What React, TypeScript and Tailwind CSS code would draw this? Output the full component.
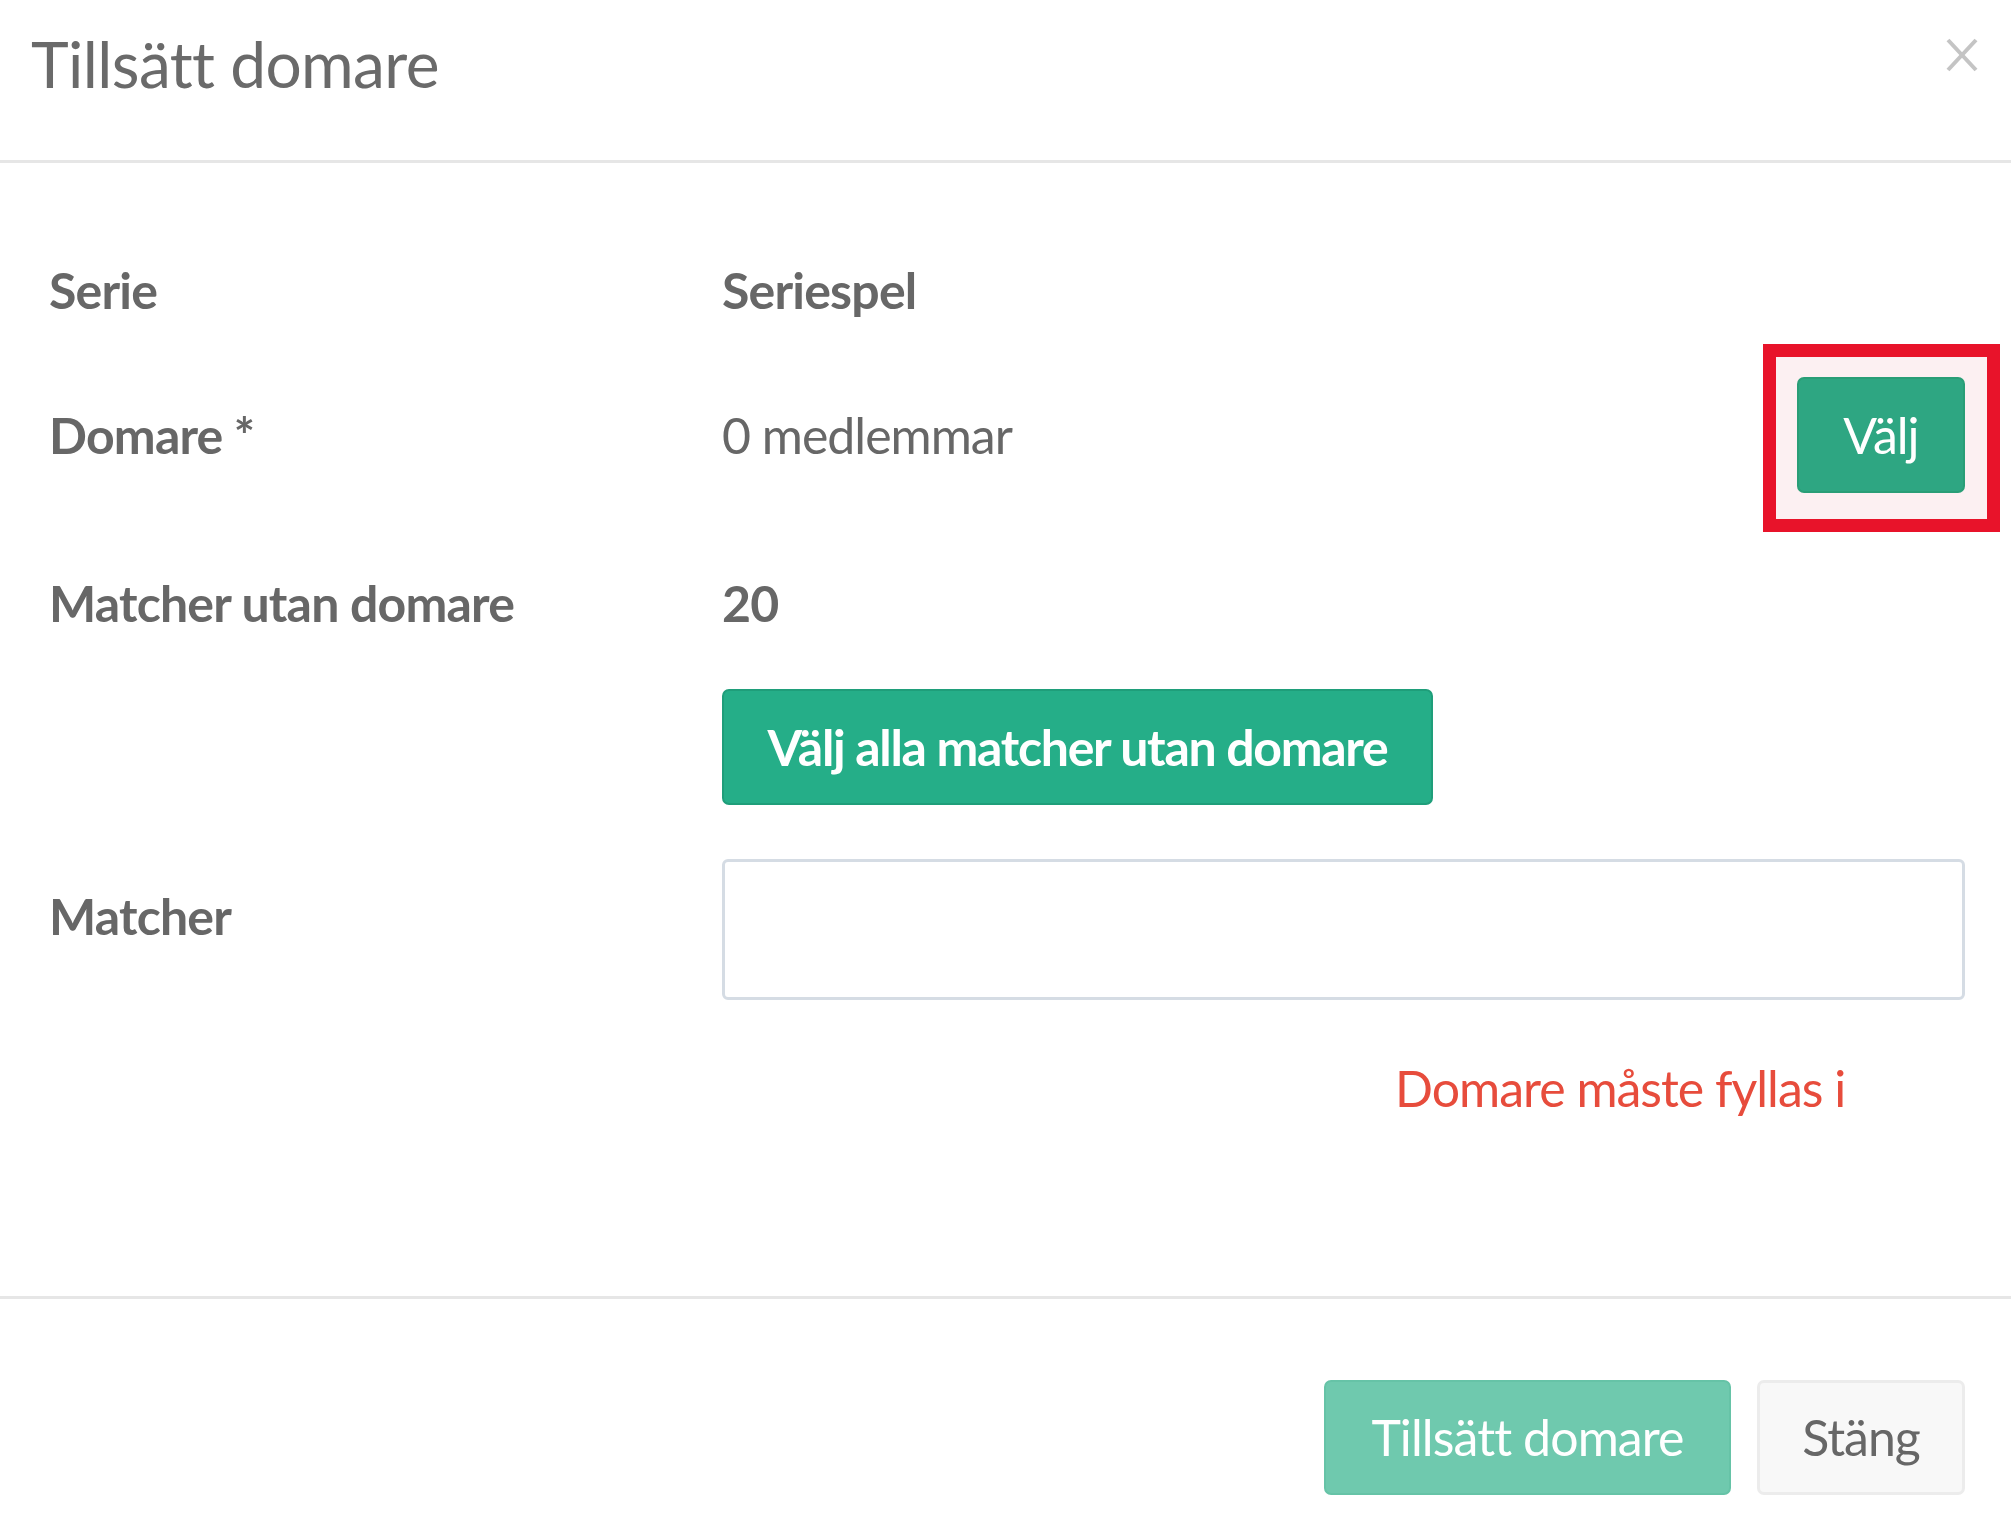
import React from "react";

export default function App() {
  const font = { fontFamily: "Lato, 'Open Sans', sans-serif" } as React.CSSProperties;
  return (
    <div className="w-[2011px] h-[1540px] bg-white text-[#676767] overflow-hidden" style={font}>
      {/* Header */}
      <div className="h-[163px] flex items-start justify-between border-b-[3px] border-[#e6e6e6]">
        <h1 className="pl-[31px] pt-[22px] text-[64px] leading-[84px] font-normal text-[#6a6a6a] tracking-[-0.6px]">
          Tillsätt domare
        </h1>
        <button className="mr-[33px] mt-[38px] w-[32px] h-[34px] flex items-center justify-center">
          <svg width="32" height="34" viewBox="0 0 32 34">
            <line x1="2" y1="2" x2="30" y2="32" stroke="#c4c4c4" strokeWidth="4" />
            <line x1="30" y1="2" x2="2" y2="32" stroke="#c4c4c4" strokeWidth="4" />
          </svg>
        </button>
      </div>

      {/* Body */}
      <div className="h-[1133px] pl-[49px] pr-[46px] flex flex-col">
        <div className="mt-[72px] h-[110px] flex items-center">
          <div className="w-[673px] text-[50px] font-bold tracking-[-0.8px]">Serie</div>
          <div className="text-[50px] font-bold tracking-[-0.8px]">Seriespel</div>
        </div>

        <div className="mt-[33px] h-[114px] flex items-center">
          <div className="w-[673px] text-[50px] font-bold tracking-[-0.8px]">Domare *</div>
          <div className="flex-1 flex items-center justify-between">
            <span className="text-[50px] font-normal tracking-[-1px]">0 medlemmar</span>
            <div className="relative">
              <div className="absolute -left-[34px] -right-[35px] -top-[33px] -bottom-[39px] border-[13px] border-[#e8132a] bg-[#fcf0f2]" />
              <button className="relative w-[168px] h-[116px] rounded-[7px] bg-[#2ea682] border-2 border-[#27996f]/60 text-white text-[50px] font-normal tracking-[-1px]">
                Välj
              </button>
            </div>
          </div>
        </div>

        <div className="mt-[56px] h-[110px] flex items-center">
          <div className="w-[673px] text-[50px] font-bold tracking-[-0.8px]">Matcher utan domare</div>
          <div className="text-[50px] font-bold tracking-[-0.8px]">20</div>
        </div>

        <div className="mt-[31px] flex">
          <div className="w-[673px]" />
          <button className="h-[116px] w-[711px] rounded-[7px] bg-[#25ae88] border-2 border-[#1f9e7a] text-white text-[50px] font-bold tracking-[-1.3px]">
            Välj alla matcher utan domare
          </button>
        </div>

        <div className="mt-[54px] flex items-start">
          <div className="w-[673px] h-[114px] flex items-center text-[50px] font-bold tracking-[-0.8px]">Matcher</div>
          <div className="flex-1 h-[141px] rounded-[6px] border-[3px] border-[#d5dce4] bg-white" />
        </div>

        <div className="mt-[58px] h-[60px] flex items-center">
          <div className="w-[673px]" />
          <div className="pl-[673px] whitespace-nowrap text-[50px] text-[#e74c3c] tracking-[-1px]">
            Domare måste fyllas i
          </div>
        </div>
      </div>

      {/* Footer */}
      <div className="border-t-[3px] border-[#e6e6e6] pt-[81px] pr-[46px] flex justify-end gap-[26px]">
        <button className="h-[115px] w-[407px] rounded-[7px] bg-[#6fc9ae] border-2 border-[#66c3a7] text-white text-[50px] font-normal tracking-[-0.9px]">
          Tillsätt domare
        </button>
        <button className="h-[115px] w-[208px] rounded-[7px] bg-[#f8f8f8] border-[3px] border-[#ececec] text-[#676767] text-[50px] font-normal tracking-[-1px]">
          Stäng
        </button>
      </div>
    </div>
  );
}
